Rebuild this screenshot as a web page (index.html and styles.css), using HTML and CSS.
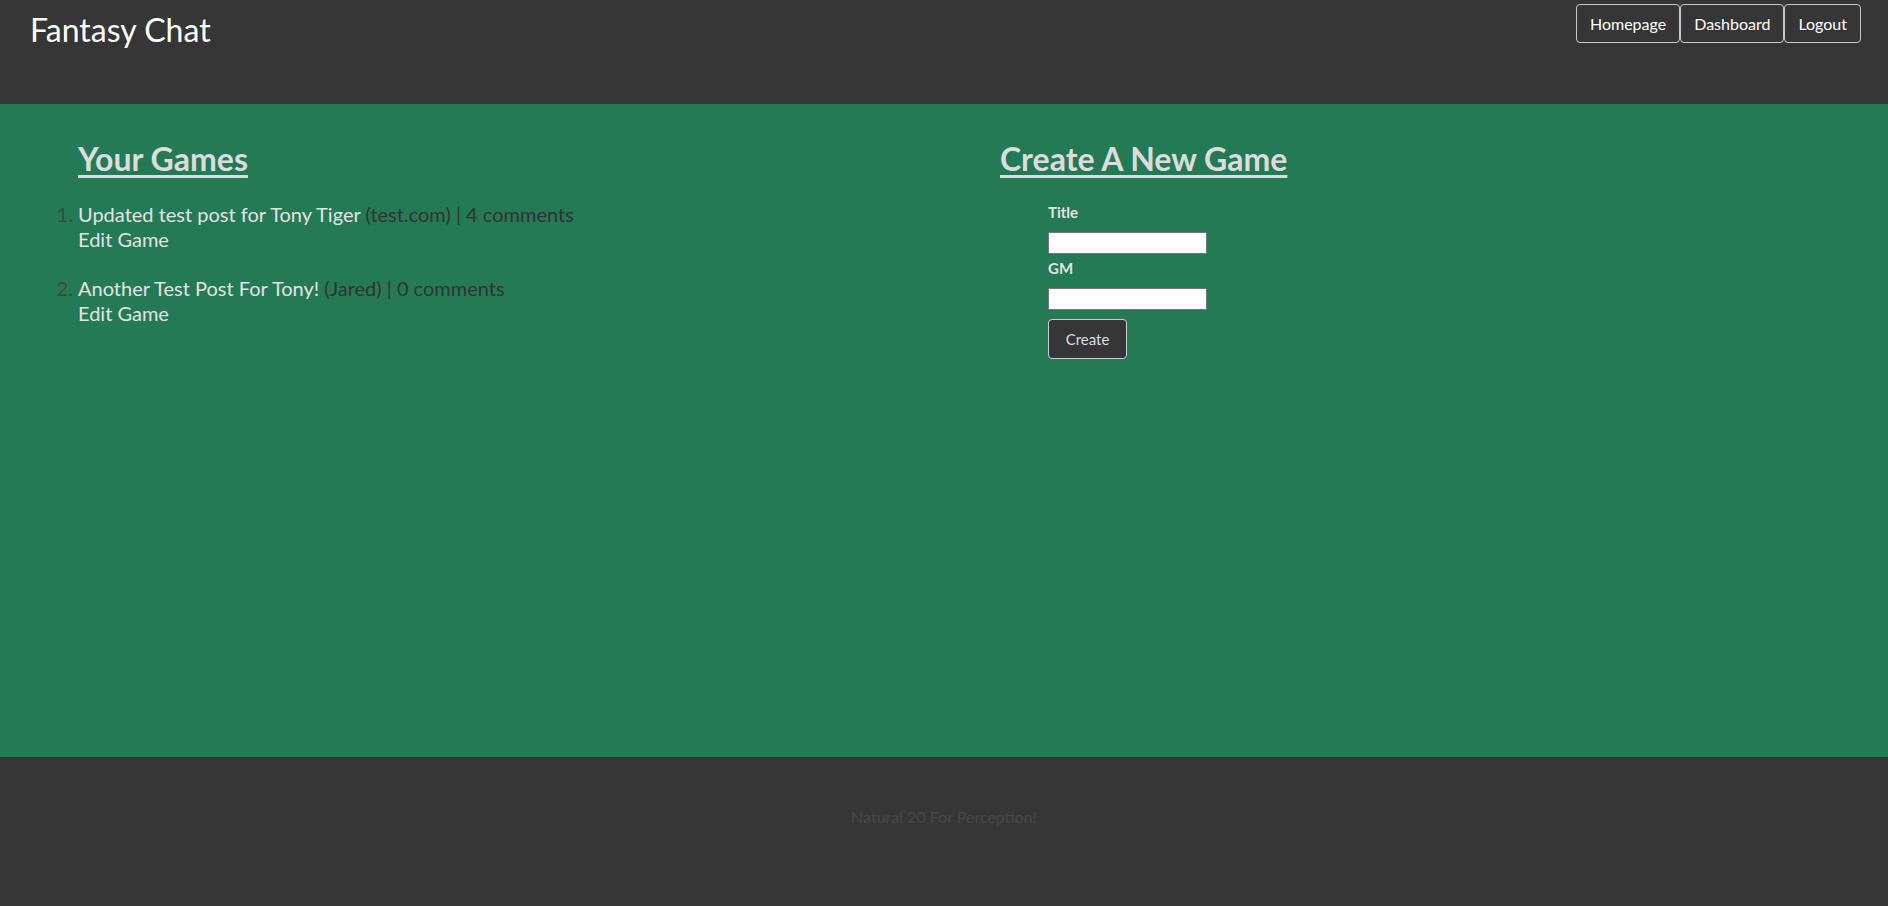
FILE: index.html
```html
<!DOCTYPE html>
<html>
<head>
<meta charset="utf-8">
<link rel="stylesheet" href="styles.css">
<title>Fantasy Chat</title>
</head>
<body>
<header class="topbar">
  <div class="brand">Fantasy Chat</div>
  <nav class="nav">
    <a class="nav-btn" href="#">Homepage</a>
    <a class="nav-btn" href="#">Dashboard</a>
    <a class="nav-btn" href="#">Logout</a>
  </nav>
</header>
<main class="main">
  <section class="col">
    <h2 class="heading">Your Games</h2>
    <ol class="games">
      <li class="game">
        <div><span class="game-title">Updated test post for Tony Tiger</span> <span class="meta">(test.com) | 4 comments</span></div>
        <div class="edit">Edit Game</div>
      </li>
      <li class="game">
        <div><span class="game-title">Another Test Post For Tony!</span> <span class="meta">(Jared) | 0 comments</span></div>
        <div class="edit">Edit Game</div>
      </li>
    </ol>
  </section>
  <section class="col">
    <h2 class="heading">Create A New Game</h2>
    <form class="form">
      <label class="label">Title</label>
      <input class="input" type="text">
      <label class="label">GM</label>
      <input class="input" type="text">
      <button class="btn" type="button">Create</button>
    </form>
  </section>
</main>
<footer class="footer">
  <p class="footer-text">Natural 20 For Perception!</p>
</footer>
</body>
</html>
```
FILE: styles.css
```css
* { box-sizing: border-box; }
html, body { margin: 0; padding: 0; }
body {
  font-family: Lato, "Open Sans", sans-serif;
  background: #363636;
  color: #ddd;
}
.topbar {
  height: 104px;
  background: #363636;
  display: flex;
  justify-content: space-between;
  align-items: flex-start;
  padding: 0 27px 0 30px;
}
.brand {
  font-size: 32px;
  line-height: 40px;
  color: #fff;
  padding-top: 10px;
}
.nav {
  display: flex;
  padding-top: 4px;
}
.nav-btn {
  display: block;
  height: 39px;
  line-height: 37px;
  padding: 0 13px;
  border: 1px solid #c8c8c8;
  border-radius: 4px;
  color: #fff;
  text-decoration: none;
  font-size: 16px;
}
.main {
  background: #257a56;
  height: 653px;
  padding: 0 20px;
  display: grid;
  grid-template-columns: 1fr 1fr;
}
.col {
  padding-left: 58px;
  padding-top: 35px;
}
.col + .col { padding-left: 56px; }
.heading {
  margin: 0;
  font-size: 32px;
  line-height: 40px;
  font-weight: 700;
  color: #dcdcdc;
  text-decoration: underline;
  text-decoration-thickness: 3px;
  text-underline-offset: 4px;
}
.games {
  margin: 23px 0 0;
  padding: 0;
  font-size: 20px;
  line-height: 25px;
  color: #3a3a3a;
}
.game { margin-bottom: 24px; }
.game::marker { color: #444; }
.game-title, .edit { color: #e3e3e3; }
.meta { color: #333; }
.form {
  margin: 23px 0 0 48px;
  display: flex;
  flex-direction: column;
  align-items: flex-start;
}
.label {
  font-size: 15px;
  font-weight: 700;
  line-height: 20px;
  color: #e3e3e3;
  margin-bottom: 10px;
}
.input {
  width: 159px;
  height: 22px;
  border: 1px solid #767676;
  background: #fff;
  margin: 0 0 4px;
  padding: 0;
}
.btn {
  margin-top: 5px;
  width: 79px;
  height: 40px;
  background: #363636;
  color: #ddd;
  border: 1px solid #ccc;
  border-radius: 4px;
  font-family: inherit;
  font-size: 15px;
}
.footer {
  height: 149px;
  background: #363636;
  display: flex;
  justify-content: center;
  padding-top: 50px;
}
.footer-text {
  margin: 0;
  font-size: 16px;
  line-height: 20px;
  color: #474747;
}
```
